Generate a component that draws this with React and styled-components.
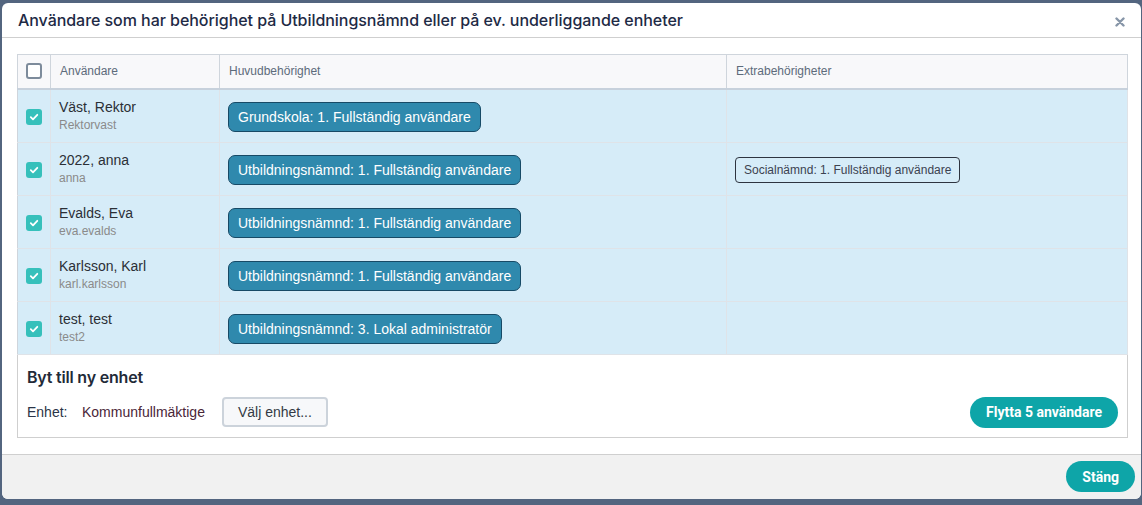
import React, { useState } from 'react';
import styled, { createGlobalStyle } from 'styled-components';

const GlobalStyle = createGlobalStyle`
	html, body {
		margin: 0;
		padding: 0;
		background: #53657f;
		height: 100%;
	}
	#root {
		height: 100%;
	}
	* {
		box-sizing: border-box;
	}
`;

const users = [
	{ name: 'Väst, Rektor', login: 'Rektorvast', main: 'Grundskola: 1. Fullständig användare', extra: null },
	{ name: '2022, anna', login: 'anna', main: 'Utbildningsnämnd: 1. Fullständig användare', extra: 'Socialnämnd: 1. Fullständig användare' },
	{ name: 'Evalds, Eva', login: 'eva.evalds', main: 'Utbildningsnämnd: 1. Fullständig användare', extra: null },
	{ name: 'Karlsson, Karl', login: 'karl.karlsson', main: 'Utbildningsnämnd: 1. Fullständig användare', extra: null },
	{ name: 'test, test', login: 'test2', main: 'Utbildningsnämnd: 3. Lokal administratör', extra: null },
];

function Check({ checked }) {
	return (
		<CheckBox $checked={checked}>
			{checked && (
				<svg width="10" height="10" viewBox="0 0 10 10">
					<path d="M1.8 5.2 L4 7.3 L8.3 2.8" fill="none" stroke="#fff" strokeWidth="1.8" strokeLinecap="round" strokeLinejoin="round" />
				</svg>
			)}
		</CheckBox>
	);
}

export default function App() {
	const [selected] = useState(users.map(() => true));

	return (
		<>
			<GlobalStyle />
			<Page>
				<Modal>
					<Header>
						<Title>Användare som har behörighet på Utbildningsnämnd eller på ev. underliggande enheter</Title>
						<Close aria-label="Stäng">
							<svg width="10" height="10" viewBox="0 0 10 10">
								<path d="M1.5 1.5 L8.5 8.5 M8.5 1.5 L1.5 8.5" stroke="#8796a8" strokeWidth="2.4" strokeLinecap="round" />
							</svg>
						</Close>
					</Header>

					<Body>
						<Table>
							<colgroup>
								<col style={{ width: 33 }} />
								<col style={{ width: 169 }} />
								<col style={{ width: 507 }} />
								<col />
							</colgroup>
							<thead>
								<tr>
									<HeadCell $center><Check checked={false} /></HeadCell>
									<HeadCell>Användare</HeadCell>
									<HeadCell>Huvudbehörighet</HeadCell>
									<HeadCell>Extrabehörigheter</HeadCell>
								</tr>
							</thead>
							<tbody>
								{users.map((u, i) => (
									<Row key={u.login}>
										<Cell $center><Check checked={selected[i]} /></Cell>
										<Cell>
											<UserName>{u.name}</UserName>
											<Login>{u.login}</Login>
										</Cell>
										<Cell>
											<MainBadge>{u.main}</MainBadge>
										</Cell>
										<Cell>
											{u.extra && <ExtraBadge>{u.extra}</ExtraBadge>}
										</Cell>
									</Row>
								))}
							</tbody>
						</Table>

						<MoveBox>
							<MoveTitle>Byt till ny enhet</MoveTitle>
							<MoveRow>
								<UnitLabel>Enhet:</UnitLabel>
								<UnitName>Kommunfullmäktige</UnitName>
								<PickButton>Välj enhet...</PickButton>
								<Spacer />
								<PillButton>Flytta 5 användare</PillButton>
							</MoveRow>
						</MoveBox>
					</Body>

					<Footer>
						<PillButton>Stäng</PillButton>
					</Footer>
				</Modal>
			</Page>
		</>
	);
}

const Page = styled.div`
	padding: 3px 1px 6px 2px;
	height: 100%;
`;

const Modal = styled.div`
	background: #fff;
	border-radius: 6px;
	overflow: hidden;
	display: flex;
	flex-direction: column;
	height: 496px;
`;

const Header = styled.div`
	display: flex;
	align-items: center;
	justify-content: space-between;
	height: 36px;
	padding: 0 14px 0 16px;
	border-bottom: 1px solid #cfcfcf;
`;

const Title = styled.h1`
	margin: 0;
	font-family: Inter, "Open Sans", sans-serif;
	font-size: 16px;
	font-weight: 500;
	color: #1e2a45;
	letter-spacing: -0.05px;
`;

const Close = styled.button`
	display: flex;
	align-items: center;
	justify-content: center;
	background: none;
	border: none;
	padding: 0;
	margin-top: 4px;
	width: 14px;
	height: 14px;
`;

const Body = styled.div`
	flex: 1;
	padding: 16px 13px 16px 15px;
`;

const Table = styled.table`
	width: 100%;
	border-collapse: collapse;
	table-layout: fixed;
	font-family: "Liberation Sans", Arial, sans-serif;
	border: 1px solid #cfd5dc;
`;

const HeadCell = styled.th`
	height: 35px;
	background: #f8f8fa;
	border-right: 1px solid #cfd5dc;
	border-bottom: 2px solid #c7d1dc;
	padding: 0 ${(p) => (p.$center ? 0 : 9)}px;
	text-align: ${(p) => (p.$center ? 'center' : 'left')};
	font-size: 12px;
	font-weight: 400;
	color: #5d6b7b;
	vertical-align: middle;

	& > span {
		margin: 0 auto;
	}
`;

const Row = styled.tr`
	background: #d6ecf8;
`;

const Cell = styled.td`
	height: 53px;
	border-right: 1px solid #dfe3e8;
	border-bottom: 1px solid #dfe3e8;
	padding: 0 ${(p) => (p.$center ? 0 : 8)}px;
	vertical-align: middle;

	& > span {
		margin: 2px auto 0;
	}
`;

const CheckBox = styled.span`
	display: flex;
	align-items: center;
	justify-content: center;
	width: 16px;
	height: 16px;
	border-radius: 3px;
	background: ${(p) => (p.$checked ? '#36c0bb' : '#fff')};
	border: ${(p) => (p.$checked ? 'none' : '2px solid #7d8b9b')};
`;

const UserName = styled.div`
	font-size: 14px;
	color: #2b2f36;
	line-height: 18px;
`;

const Login = styled.div`
	font-size: 12px;
	color: #8a8a8a;
	line-height: 15px;
	margin-top: 2px;
`;

const MainBadge = styled.span`
	display: inline-flex;
	align-items: center;
	height: 30px;
	padding: 0 9px;
	border-radius: 7px;
	background: #2f89ad;
	border: 1px solid #174a66;
	color: #fff;
	font-size: 14px;
	margin-top: 2px;
`;

const ExtraBadge = styled.span`
	display: inline-flex;
	align-items: center;
	height: 26px;
	padding: 0 8px;
	border-radius: 4px;
	border: 1px solid #2e3440;
	color: #3c4250;
	font-size: 12px;
	margin-top: 2px;
`;

const MoveBox = styled.div`
	border: 1px solid #cfcfcf;
	border-top: none;
	padding: 12px 9px 9px 9px;
`;

const MoveTitle = styled.h2`
	margin: 0 0 10px;
	font-family: Inter, "Open Sans", sans-serif;
	font-size: 16px;
	font-weight: 600;
	color: #222a38;
	letter-spacing: -0.2px;
`;

const MoveRow = styled.div`
	display: flex;
	align-items: center;
	font-family: "Liberation Sans", Arial, sans-serif;
	font-size: 14px;
`;

const UnitLabel = styled.span`
	color: #2b3548;
	width: 55px;
`;

const UnitName = styled.span`
	color: #4a2638;
	margin-right: 17px;
`;

const PickButton = styled.button`
	height: 30px;
	padding: 0 14px;
	background: #f7f8fa;
	border: 2px solid #ccd3db;
	border-radius: 4px;
	font-family: "Liberation Sans", Arial, sans-serif;
	font-size: 14px;
	color: #333a44;
`;

const Spacer = styled.div`
	flex: 1;
`;

const PillButton = styled.button`
	height: 31px;
	padding: 0 16px;
	border: none;
	border-radius: 16px;
	background: #0ea5a8;
	color: #fff;
	font-family: Roboto, "Liberation Sans", sans-serif;
	font-weight: 700;
	font-size: 14px;
`;

const Footer = styled.div`
	display: flex;
	justify-content: flex-end;
	align-items: center;
	height: 47px;
	margin-top: auto;
	padding: 0 6px 0 0;
	background: #f1f1f1;
	border-top: 1px solid #cfcfcf;
`;
